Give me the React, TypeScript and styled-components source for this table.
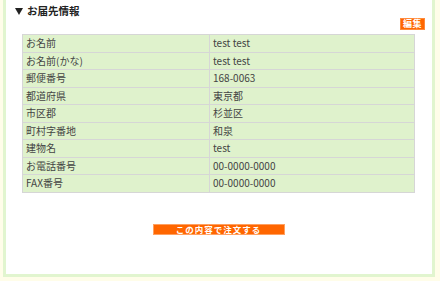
import styled, { createGlobalStyle } from "styled-components";

const GlobalStyle = createGlobalStyle`
  html, body {
    margin: 0;
    padding: 0;
    background: #fffde9;
  }
  body {
    font-family: "Noto Sans CJK JP", "DejaVu Sans", sans-serif;
    color: #333;
  }
`

const Panel = styled.div`
  background: #fff;
  border: 3px solid #e1f5cf;
  border-top: none;
  box-sizing: border-box;
  height: 277px;
  margin-left: 3px;
  padding: 5px 7px 0 6px;
  width: 432px;
`
const Title = styled.h2`
  align-items: center;
  display: flex;
  font-size: 10.5px;
  font-weight: bold;
  gap: 2px;
  height: 12px;
  line-height: 12px;
  margin: 0 0 0 3px;
  color: #222;
`
const Arrow = styled.span`
  border-left: 4px solid transparent;
  border-right: 4px solid transparent;
  border-top: 7px solid #222;
  display: inline-block;
  margin-right: 2px;
`
const EditRow = styled.div`
  display: flex;
  justify-content: flex-end;
  margin-top: 1px;
`
const SmallButton = styled.span`
  background: #ff6600;
  border: 1px solid #ff8a3a;
  box-sizing: border-box;
  color: #fff;
  font-size: 9px;
  font-weight: bold;
  height: 12px;
  line-height: 10px;
  text-align: center;
  width: 25px;
  letter-spacing: 0.5px;
`
const Table = styled.table`
  border-collapse: collapse;
  border: 1px solid #d4d4d4;
  font-size: 10px;
  margin: 4px auto 0;
  width: 393px;
  td {
    background: #dff2cc;
    border: 1px solid #d6d6d6;
    box-sizing: border-box;
    color: #444;
    height: 17.5px;
    line-height: 14px;
    padding: 0 3px;
    white-space: nowrap;
  }
  td:first-child {
    width: 187px;
  }
`
const Footer = styled.div`
  display: flex;
  justify-content: center;
  margin-top: 31px;
`
const OrderButton = styled.button`
  background: #ff6600;
  border: 1px solid #ffa060;
  box-sizing: border-box;
  color: #fff;
  cursor: pointer;
  font-family: "Noto Sans CJK JP", "DejaVu Sans", sans-serif;
  font-size: 8.5px;
  font-weight: bold;
  height: 11px;
  letter-spacing: 1px;
  line-height: 9px;
  padding: 0;
  width: 132px;
`

const rows: [string, string][] = [
  ["お名前", "test test"],
  ["お名前(かな)", "test test"],
  ["郵便番号", "168-0063"],
  ["都道府県", "東京都"],
  ["市区郡", "杉並区"],
  ["町村字番地", "和泉"],
  ["建物名", "test"],
  ["お電話番号", "00-0000-0000"],
  ["FAX番号", "00-0000-0000"],
]

const App = () => {
  return (
    <>
      <GlobalStyle />
      <Panel>
        <Title><Arrow />お届先情報</Title>
        <EditRow>
          <SmallButton>編集</SmallButton>
        </EditRow>
        <Table>
          <tbody>
            {rows.map(([label, value]) => (
              <tr key={label}>
                <td>{label}</td>
                <td>{value}</td>
              </tr>
            ))}
          </tbody>
        </Table>
        <Footer>
          <OrderButton>この内容で注文する</OrderButton>
        </Footer>
      </Panel>
    </>
  )
}
export default App
